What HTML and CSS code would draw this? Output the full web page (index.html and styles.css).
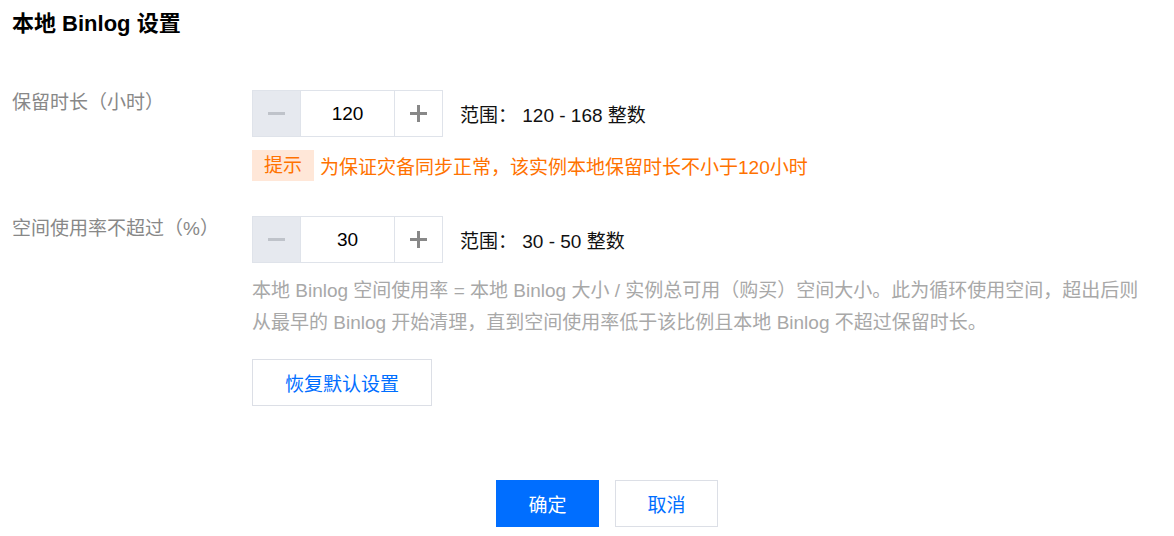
FILE: index.html
```html
<!DOCTYPE html>
<html lang="zh-CN">
<head>
<meta charset="utf-8">
<title>本地 Binlog 设置</title>
<link rel="stylesheet" href="styles.css">
</head>
<body>
<div class="page">
  <h1 class="title">本地 Binlog 设置</h1>
  <div class="form">
    <div class="row">
      <div class="label">保留时长（小时）</div>
      <div class="control">
        <div class="line">
          <div class="stepper">
            <button class="step minus" type="button" aria-label="减少"><svg width="17" height="17" viewBox="0 0 17 17"><rect x="0" y="7" width="17" height="3"/></svg></button>
            <div class="value">120</div>
            <button class="step plus" type="button" aria-label="增加"><svg width="17" height="17" viewBox="0 0 17 17"><rect x="0" y="7" width="17" height="3"/><rect x="7" y="0" width="3" height="17"/></svg></button>
          </div>
          <div class="range">范围： 120 - 168 整数</div>
        </div>
        <div class="hint"><span class="tag">提示</span><span class="hint-text">为保证灾备同步正常，该实例本地保留时长不小于120小时</span></div>
      </div>
    </div>
    <div class="row row2">
      <div class="label">空间使用率不超过（%）</div>
      <div class="control">
        <div class="line">
          <div class="stepper">
            <button class="step minus" type="button" aria-label="减少"><svg width="17" height="17" viewBox="0 0 17 17"><rect x="0" y="7" width="17" height="3"/></svg></button>
            <div class="value">30</div>
            <button class="step plus" type="button" aria-label="增加"><svg width="17" height="17" viewBox="0 0 17 17"><rect x="0" y="7" width="17" height="3"/><rect x="7" y="0" width="3" height="17"/></svg></button>
          </div>
          <div class="range">范围： 30 - 50 整数</div>
        </div>
        <p class="desc">本地 Binlog 空间使用率 = 本地 Binlog 大小 / 实例总可用（购买）空间大小。此为循环使用空间，超出后则从最早的 Binlog 开始清理，直到空间使用率低于该比例且本地 Binlog 不超过保留时长。</p>
        <button class="btn reset" type="button">恢复默认设置</button>
      </div>
    </div>
  </div>
  <div class="footer">
    <button class="btn primary" type="button">确定</button>
    <button class="btn cancel" type="button">取消</button>
  </div>
</div>
</body>
</html>
```
FILE: styles.css
```css
* { box-sizing: border-box; }
html, body { margin: 0; padding: 0; background: #fff; }
body {
  font-family: "Liberation Sans", "Noto Sans CJK SC", sans-serif;
  font-size: 19px;
  color: #222;
}
.page {
  width: 1174px;
  height: 536px;
  padding: 9px 0 0 12px;
  overflow: hidden;
}
.title {
  margin: 0;
  font-size: 22px;
  line-height: 30px;
  font-weight: bold;
  color: #000;
}
.form {
  margin-top: 51px;
}
.row {
  display: flex;
  align-items: flex-start;
}
.row2 {
  margin-top: 35px;
}
.label {
  width: 240px;
  flex: none;
  line-height: 26px;
  color: #888;
}
.control {
  display: flex;
  flex-direction: column;
  align-items: flex-start;
}
.line {
  display: flex;
  align-items: center;
}
.stepper {
  display: flex;
  height: 47px;
  border: 1px solid #dfe3ea;
}
.step {
  width: 48px;
  height: 100%;
  border: 0;
  padding: 0;
  margin: 0;
  background: #fff;
  display: flex;
  align-items: center;
  justify-content: center;
  cursor: pointer;
}
.step svg { display: block; }
.step.minus {
  background: #e6e9ef;
  border-right: 1px solid #dfe3ea;
}
.step.minus svg { fill: #bfc3ca; }
.step.plus {
  border-left: 1px solid #dfe3ea;
}
.step.plus svg { fill: #888; }
.value {
  width: 93px;
  display: flex;
  align-items: center;
  justify-content: center;
  color: #000;
}
.range {
  margin-left: 17px;
  color: #111;
}
.hint {
  margin-top: 13px;
  display: flex;
  align-items: center;
  color: #ff7200;
}
.tag {
  height: 31px;
  line-height: 31px;
  padding: 0 12px;
  background: #ffe7d8;
  color: #ff7200;
}
.hint-text {
  margin-left: 6px;
}
.desc {
  margin: 12px 0 0;
  width: 898px;
  line-height: 32px;
  color: #a8a8a8;
}
.btn {
  font-family: inherit;
  font-size: 19px;
  height: 47px;
  padding: 0;
  margin: 0;
  cursor: pointer;
}
.reset {
  margin-top: 20px;
  width: 180px;
  background: #fff;
  border: 1px solid #dcdfe6;
  color: #006eff;
}
.footer {
  margin-top: 74px;
  margin-left: 28px;
  display: flex;
  justify-content: center;
  gap: 16px;
}
.primary {
  width: 103px;
  background: #006eff;
  border: 1px solid #006eff;
  color: #fff;
}
.cancel {
  width: 103px;
  background: #fff;
  border: 1px solid #dcdfe6;
  color: #006eff;
}
```
